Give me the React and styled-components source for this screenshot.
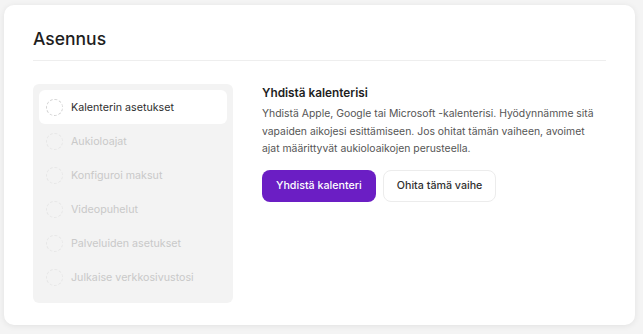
import styled, { createGlobalStyle } from "styled-components";

const steps = [
  "Kalenterin asetukset",
  "Aukioloajat",
  "Konfiguroi maksut",
  "Videopuhelut",
  "Palveluiden asetukset",
  "Julkaise verkkosivustosi",
];

export default function App() {
  return (
    <>
      <GlobalStyle />
      <Page>
        <Card>
          <Title>Asennus</Title>
          <Divider />
          <Body>
            <StepList>
              {steps.map((step, i) => (
                <Step key={step} $active={i === 0}>
                  <StepCircle $active={i === 0} />
                  {step}
                </Step>
              ))}
            </StepList>
            <Content>
              <Heading>Yhdistä kalenterisi</Heading>
              <Text>
                Yhdistä Apple, Google tai Microsoft -kalenterisi. Hyödynnämme
                sitä vapaiden aikojesi esittämiseen. Jos ohitat tämän vaiheen,
                avoimet ajat määrittyvät aukioloaikojen perusteella.
              </Text>
              <Buttons>
                <PrimaryButton>Yhdistä kalenteri</PrimaryButton>
                <SecondaryButton>Ohita tämä vaihe</SecondaryButton>
              </Buttons>
            </Content>
          </Body>
        </Card>
      </Page>
    </>
  );
}

const GlobalStyle = createGlobalStyle`
  *, *::before, *::after {
    box-sizing: border-box;
  }
  body {
    margin: 0;
    background: #f4f4f4;
    font-family: Inter, "Noto Sans", sans-serif;
  }
`;

const Page = styled.div`
  padding: 5px 8px 9px 4px;
  height: 334px;
`;

const Card = styled.div`
  background: #fff;
  border-radius: 10px;
  box-shadow: 0 1px 6px rgba(0, 0, 0, 0.08);
  padding: 22px 29px 22px 29px;
  height: 100%;
`;

const Title = styled.h1`
  margin: 0;
  font-size: 17.5px;
  font-weight: 500;
  color: #1e1e1e;
  line-height: 24px;
`;

const Divider = styled.div`
  height: 1px;
  background: #eeeeee;
  margin: 9px 0 23px;
`;

const Body = styled.div`
  display: flex;
  gap: 29px;
`;

const StepList = styled.div`
  width: 200px;
  flex-shrink: 0;
  background: #f3f3f3;
  border-radius: 6px;
  padding: 6px 6px 9px;
  display: flex;
  flex-direction: column;
`;

const Step = styled.div`
  display: flex;
  align-items: center;
  gap: 8px;
  height: 34px;
  padding: 0 7px;
  border-radius: 6px;
  font-size: 10.7px;
  color: ${(p) => (p.$active ? "#2f2f2f" : "#c9c9c9")};
  background: ${(p) => (p.$active ? "#fff" : "transparent")};
`;

const StepCircle = styled.span`
  width: 17px;
  height: 17px;
  border-radius: 50%;
  border: 1px dashed ${(p) => (p.$active ? "#d2d2d2" : "#e6e6e6")};
  flex-shrink: 0;
`;

const Content = styled.div`
  flex: 1;
  padding-top: 1px;
`;

const Heading = styled.h2`
  margin: 0 0 4px;
  font-size: 11.8px;
  font-weight: 600;
  color: #1e1e1e;
  line-height: 16px;
`;

const Text = styled.p`
  max-width: 334px;
  margin: 0 0 12px;
  font-size: 10.4px;
  line-height: 17.5px;
  color: #555;
`;

const Buttons = styled.div`
  display: flex;
  gap: 7px;
`;

const PrimaryButton = styled.button`
  height: 32px;
  padding: 0 14px;
  border: none;
  border-radius: 8px;
  background: #6b1ec4;
  color: #fff;
  font-family: inherit;
  font-size: 10.7px;
  font-weight: 500;
`;

const SecondaryButton = styled.button`
  height: 32px;
  padding: 0 13px;
  border: 1px solid #ececec;
  border-radius: 8px;
  background: #fff;
  color: #2f2f2f;
  font-family: inherit;
  font-size: 10.7px;
  font-weight: 500;
`;
